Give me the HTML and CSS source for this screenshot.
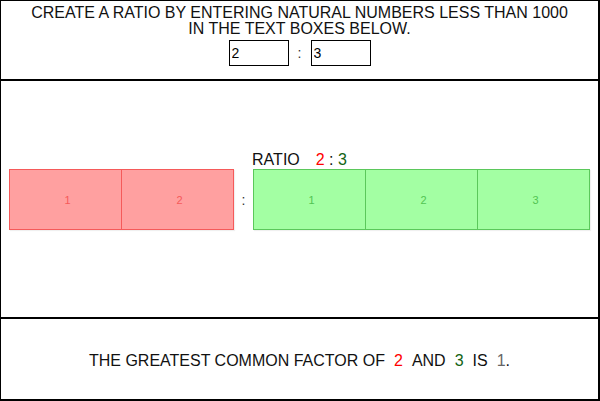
FILE: index.html
```html
<!DOCTYPE html>
<html>
<head>
<meta charset="utf-8">
<link rel="stylesheet" href="styles.css">
</head>
<body>
<div class="frame">
  <section class="top">
    <p class="intro">CREATE A RATIO BY ENTERING NATURAL NUMBERS LESS THAN 1000<br>IN THE TEXT BOXES BELOW.</p>
    <div class="inputs">
      <input class="num" type="text" value="2">
      <span class="sep">:</span>
      <input class="num" type="text" value="3">
    </div>
  </section>
  <section class="middle">
    <div class="label">RATIO<span class="red gap">2</span> : <span class="green">3</span></div>
    <div class="bars">
      <div class="bar bar-red">
        <div class="cell">1</div>
        <div class="cell">2</div>
      </div>
      <span class="colon">:</span>
      <div class="bar bar-green">
        <div class="cell">1</div>
        <div class="cell">2</div>
        <div class="cell">3</div>
      </div>
    </div>
  </section>
  <section class="bottom">
    <p class="gcf">THE GREATEST COMMON FACTOR OF<span class="red pad">2</span>AND<span class="green pad">3</span>IS<span class="gray pad-l">1</span>.</p>
  </section>
</div>
</body>
</html>
```
FILE: styles.css
```css
* { box-sizing: border-box; }
html, body { margin: 0; padding: 0; background: #fff; }
body { font-family: "Liberation Sans", Arial, sans-serif; color: #111; }
.frame {
  width: 600px;
  height: 401px;
  border-style: solid;
  border-color: #000;
  border-width: 1px 2px 2px 1px;
  display: flex;
  flex-direction: column;
}
.top {
  height: 80px;
  border-bottom: 2px solid #000;
  padding-top: 4px;
  text-align: center;
}
.intro {
  margin: 0;
  font-size: 16px;
  line-height: 16px;
}
.inputs {
  margin-top: 3px;
  display: flex;
  justify-content: center;
  align-items: center;
}
.num {
  width: 60px;
  height: 26px;
  border: 1px solid #000;
  padding: 0 2px;
  margin: 0;
  font-family: "Liberation Sans", Arial, sans-serif;
  font-size: 14px;
  color: #000;
  outline: none;
  border-radius: 0;
}
.sep {
  width: 22px;
  text-align: center;
  font-size: 14px;
  color: #333;
}
.middle {
  height: 238px;
  border-bottom: 2px solid #000;
  padding-top: 70px;
}
.label {
  text-align: center;
  font-size: 16px;
  line-height: 17px;
  margin-bottom: 1px;
}
.gap { margin-left: 16px; }
.red { color: #f00; }
.green { color: #136313; }
.gray { color: #666; }
.bars {
  display: flex;
  justify-content: center;
  align-items: center;
}
.bar {
  display: flex;
  height: 61px;
  border: 1px solid;
  box-shadow: 1px 1px 1px rgba(0, 0, 0, 0.06);
}
.bar-red { width: 225px; background: #ffa0a0; border-color: #f55a5a; color: #f55a5a; }
.bar-green { width: 337px; background: #a3ffa3; border-color: #5bc85b; color: #52c452; }
.cell {
  flex: 1;
  display: flex;
  align-items: center;
  justify-content: center;
  padding-left: 4px;
  font-size: 11px;
}
.cell + .cell { border-left: 1px solid; }
.bar-red .cell + .cell { border-left-color: #f55a5a; }
.bar-green .cell + .cell { border-left-color: #5bc85b; }
.colon {
  width: 19px;
  text-align: center;
  font-size: 14px;
  color: #333;
}
.bottom {
  flex: 1;
  display: flex;
  align-items: center;
  justify-content: center;
  padding-top: 2px;
}
.gcf {
  margin: 0;
  font-size: 16px;
  line-height: 17px;
}
.pad { margin: 0 9px; }
.pad-l { margin-left: 9px; }
```
